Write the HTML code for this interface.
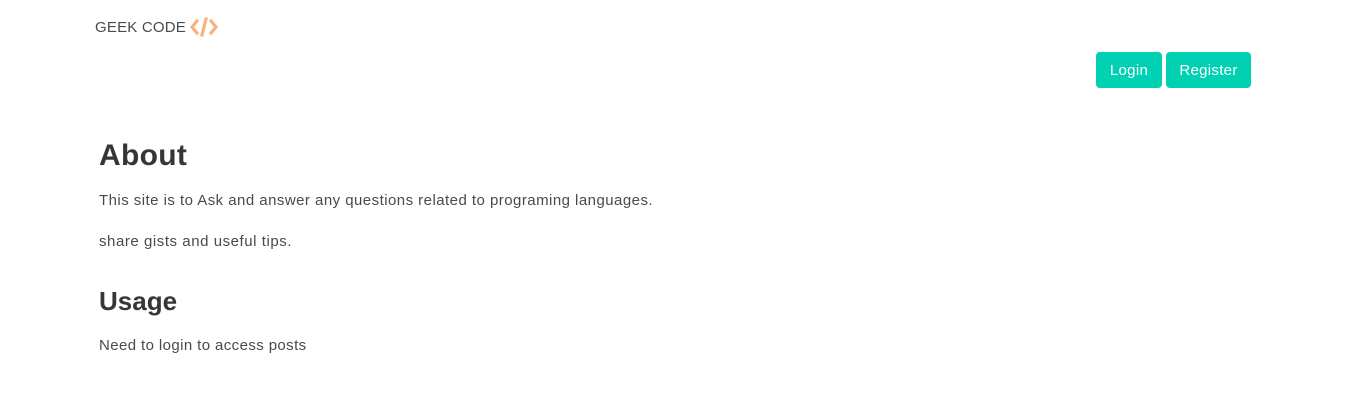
<!DOCTYPE html>
<html><head><meta charset="utf-8"><style>
body{margin:0;width:1350px;height:403px;background:#fff;font-family:"Liberation Sans",sans-serif;color:#4a4a4a;position:relative;overflow:hidden}
.logo{position:absolute;left:95px;top:16px;font-size:15px;color:#4a4a4a;display:flex;align-items:center;letter-spacing:0.2px}
.btn{position:absolute;top:52px;height:36px;background:#00d1b2;color:#fff;border-radius:4px;font-size:15px;line-height:38px;text-align:center;letter-spacing:0.3px}
h1{position:absolute;left:99px;top:139px;margin:0;font-size:30px;font-weight:bold;color:#363636;letter-spacing:0.3px}
h2{position:absolute;left:99px;top:286px;margin:0;font-size:26px;font-weight:bold;color:#363636}
p{position:absolute;left:99px;margin:0;font-size:15px;color:#4a4a4a;letter-spacing:0.46px}
</style></head><body>
<div class="logo">GEEK CODE<svg width="30" height="22" viewBox="0 0 30 22" style="margin-left:3px"><g fill="none" stroke="#f9b27f" stroke-width="3.2" stroke-linecap="square"><path d="M8 5 L3 11 L8 17"/><path d="M22 5 L27 11 L22 17"/><path d="M17 3 L13 19"/></g></svg></div>
<div class="btn" style="left:1096px;width:66px">Login</div>
<div class="btn" style="left:1166px;width:85px">Register</div>
<h1>About</h1>
<p style="top:192px">This site is to Ask and answer any questions related to programing languages.</p>
<p style="top:233px;letter-spacing:0.55px">share gists and useful tips.</p>
<h2>Usage</h2>
<p style="top:337px;letter-spacing:0.4px">Need to login to access posts</p>
</body></html>
